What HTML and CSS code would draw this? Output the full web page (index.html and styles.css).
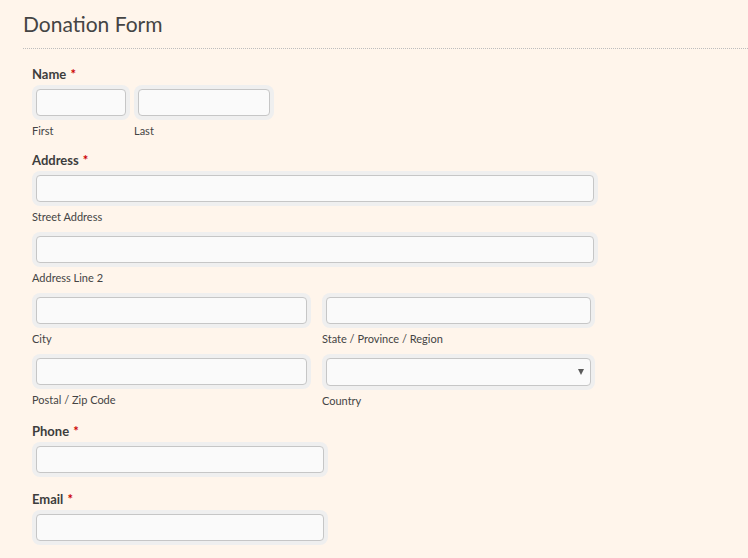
FILE: index.html
```html
<!DOCTYPE html>
<html lang="en">
<head>
<meta charset="utf-8">
<title>Donation Form</title>
<link rel="stylesheet" href="styles.css">
</head>
<body>
<div class="page">
  <div class="header">
    <h1 class="title">Donation Form</h1>
  </div>
  <form class="form">
    <div class="field">
      <div class="label">Name <span class="req">*</span></div>
      <div class="row">
        <div class="col col-first">
          <input class="input" type="text">
          <div class="sub">First</div>
        </div>
        <div class="col col-last">
          <input class="input" type="text">
          <div class="sub">Last</div>
        </div>
      </div>
    </div>

    <div class="field">
      <div class="label">Address <span class="req">*</span></div>
      <div class="addr">
        <div class="col col-full">
          <input class="input" type="text">
          <div class="sub">Street Address</div>
        </div>
        <div class="col col-full">
          <input class="input" type="text">
          <div class="sub">Address Line 2</div>
        </div>
        <div class="pair">
          <div class="col col-left">
            <input class="input" type="text">
            <div class="sub">City</div>
          </div>
          <div class="col col-right">
            <input class="input" type="text">
            <div class="sub">State / Province / Region</div>
          </div>
        </div>
        <div class="pair">
          <div class="col col-left">
            <input class="input" type="text">
            <div class="sub">Postal / Zip Code</div>
          </div>
          <div class="col col-right">
            <div class="select-wrap">
              <select class="input select"><option></option></select>
            </div>
            <div class="sub sub-country">Country</div>
          </div>
        </div>
      </div>
    </div>

    <div class="field field-phone">
      <div class="label">Phone <span class="req">*</span></div>
      <div class="col col-med">
        <input class="input" type="text">
      </div>
    </div>

    <div class="field field-email">
      <div class="label">Email <span class="req">*</span></div>
      <div class="col col-med">
        <input class="input" type="text">
      </div>
    </div>
  </form>
</div>
</body>
</html>
```

FILE: styles.css
```css
* { box-sizing: border-box; }

body {
  margin: 0;
  background: #fff5eb;
  font-family: Lato, "Open Sans", sans-serif;
  color: #444;
}

.page {
  width: 748px;
  height: 558px;
  overflow: hidden;
}

.header {
  margin-left: 23px;
  padding-top: 10px;
  padding-bottom: 10px;
  border-bottom: 1px dotted #bdbdbd;
}

.title {
  margin: 0;
  font-size: 21px;
  line-height: 28px;
  font-weight: 400;
  color: #444;
}

.form {
  margin: 17px 0 0 32px;
}

.field + .field { margin-top: 14px; }
.field-phone.field { margin-top: 15px; }
.field-email.field { margin-top: 14px; }

.label {
  font-size: 13px;
  line-height: 16px;
  font-weight: 700;
  color: #3d3d3d;
  margin-bottom: 3px;
}

.req {
  color: #cc0000;
  font-weight: 700;
  margin-left: 1px;
}

.row, .pair {
  display: flex;
  gap: 4px;
}

.pair { gap: 11px; }

.addr {
  display: flex;
  flex-direction: column;
  gap: 8px;
}

.col { display: flex; flex-direction: column; }
.col-first { width: 98px; }
.col-last { width: 140px; }
.col-full { width: 566px; }
.col-left { width: 279px; }
.col-right { width: 273px; }
.col-med { width: 296px; }

.input {
  display: block;
  width: calc(100% - 8px);
  height: 27px;
  margin: 4px;
  padding: 0 6px;
  border: 1px solid #c6c6c6;
  border-radius: 4px;
  background: #fafafa;
  box-shadow: 0 0 0 4px #efefef;
  font-family: inherit;
  font-size: 13px;
  color: #333;
  outline: none;
}

.select-wrap {
  position: relative;
}

.select {
  -webkit-appearance: none;
  appearance: none;
  height: 28px;
}

.select-wrap::after {
  content: "";
  position: absolute;
  right: 11px;
  top: 15px;
  border-left: 3.5px solid transparent;
  border-right: 3.5px solid transparent;
  border-top: 6px solid #5a5a5a;
}

.sub {
  margin-top: 4px;
  font-size: 11px;
  line-height: 14px;
  color: #444;
}
```
